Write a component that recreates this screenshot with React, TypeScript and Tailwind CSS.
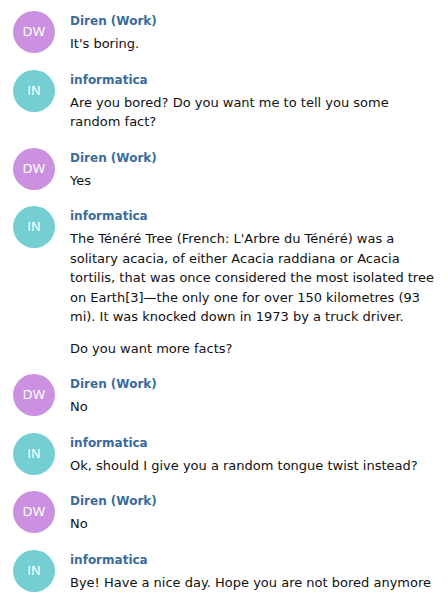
import React from "react";

type Msg = { who: "dw" | "in"; paras: string[] };

const msgs: Msg[] = [
  { who: "dw", paras: ["It's boring."] },
  { who: "in", paras: ["Are you bored? Do you want me to tell you some random fact?"] },
  { who: "dw", paras: ["Yes"] },
  {
    who: "in",
    paras: [
      "The Ténéré Tree (French: L'Arbre du Ténéré) was a solitary acacia, of either Acacia raddiana or Acacia tortilis, that was once considered the most isolated tree on Earth[3]—the only one for over 150 kilometres (93 mi). It was knocked down in 1973 by a truck driver.",
      "Do you want more facts?",
    ],
  },
  { who: "dw", paras: ["No"] },
  { who: "in", paras: ["Ok, should I give you a random tongue twist instead?"] },
  { who: "dw", paras: ["No"] },
  { who: "in", paras: ["Bye! Have a nice day. Hope you are not bored anymore"] },
];

export default function App() {
  return (
    <div
      className="w-[448px] h-[603px] overflow-hidden bg-white pt-[11px] pl-[13px] pr-[10px] flex flex-col gap-[16px]"
      style={{ fontFamily: '"DejaVu Sans", sans-serif' }}
    >
      {msgs.map((m, i) => (
        <div key={i} className="flex items-start gap-[15px]">
          {m.who === "dw" ? (
            <div className="w-[42px] h-[42px] shrink-0 rounded-full bg-[#cc90e0] flex items-center justify-center text-white text-[13px]">
              DW
            </div>
          ) : (
            <div className="w-[42px] h-[42px] shrink-0 rounded-full bg-[#75ced1] flex items-center justify-center text-white text-[13px]">
              IN
            </div>
          )}
          <div className="flex flex-col min-w-0">
            <div className="text-[12px] leading-[20px] font-bold text-[#3a6b9c] mb-[3px]">
              {m.who === "dw" ? "Diren (Work)" : "informatica"}
            </div>
            <div className="flex flex-col gap-[12px]">
              {m.paras.map((p, j) => (
                <p key={j} className="text-[13px] leading-[19.5px] text-[#111111]">
                  {p}
                </p>
              ))}
            </div>
          </div>
        </div>
      ))}
    </div>
  );
}
